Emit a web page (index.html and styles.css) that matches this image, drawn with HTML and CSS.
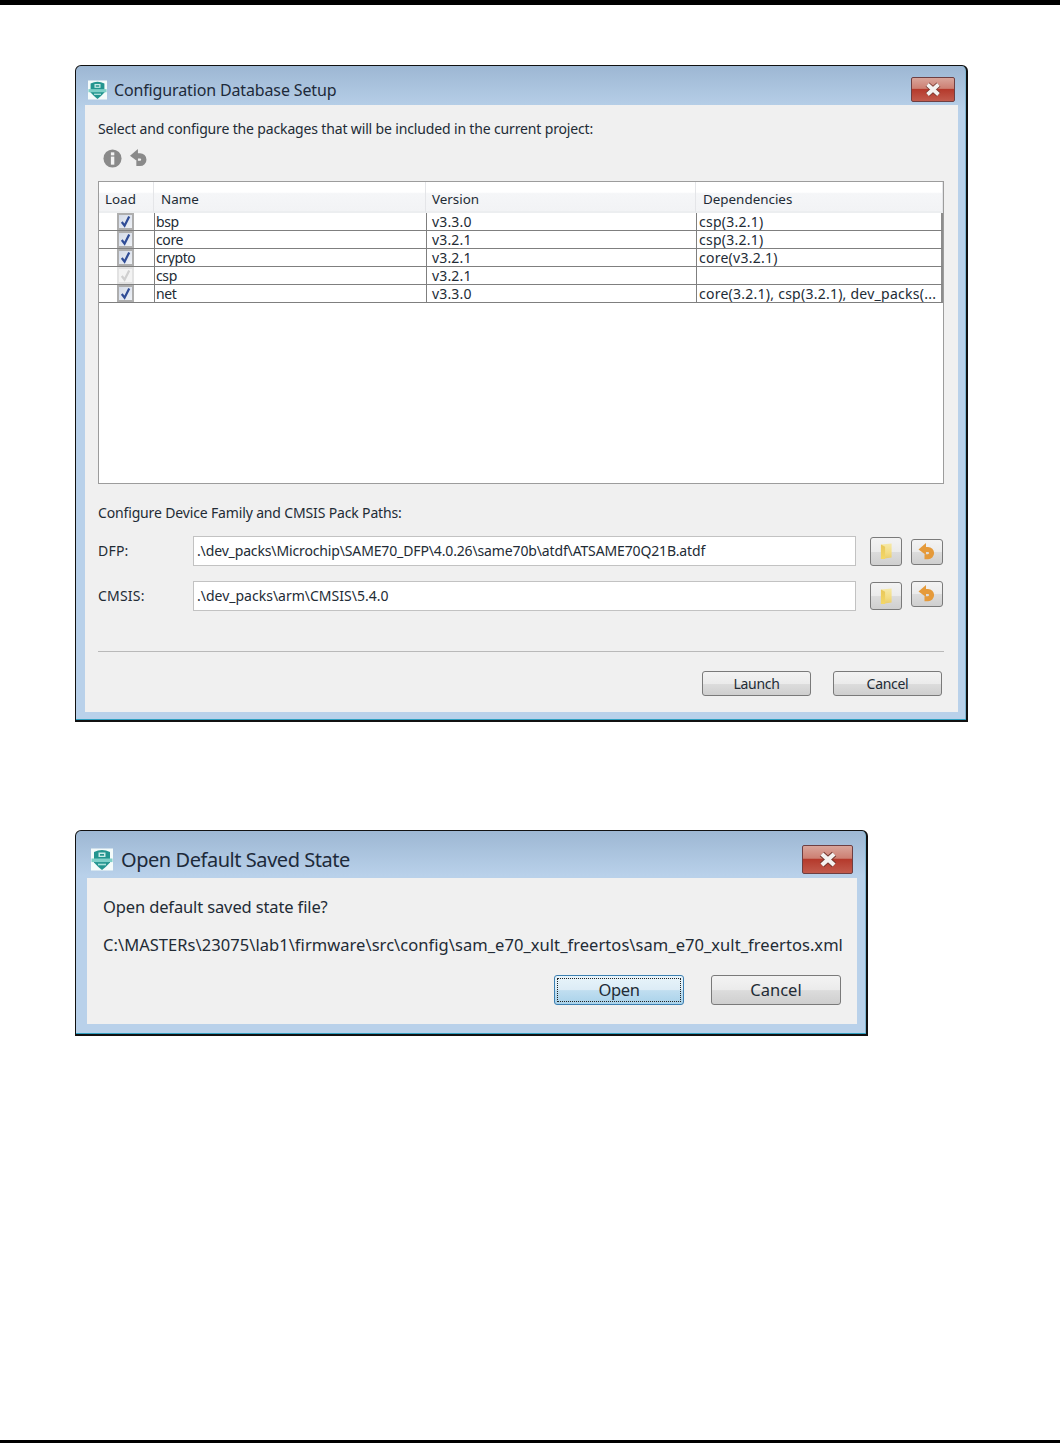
FILE: index.html
```html
<!DOCTYPE html>
<html lang="en">
<head>
  <meta charset="UTF-8" />
  <title>Configuration Database Setup</title>
  <link rel="stylesheet" href="styles.css">
</head>
<body>

  <!-- shared icons -->
  <svg class="defs" width="0" height="0">
    <defs>
      <linearGradient id="folder-fill" x1="0" y1="0" x2="0" y2="1">
        <stop offset="0" stop-color="#f6e9a8"/>
        <stop offset="0.6" stop-color="#f3dc82"/>
        <stop offset="1" stop-color="#e9cc6a"/>
      </linearGradient>
      <linearGradient id="folder-side" x1="0" y1="0" x2="0" y2="1">
        <stop offset="0" stop-color="#e8c75a"/>
        <stop offset="1" stop-color="#f4d765"/>
      </linearGradient>
    </defs>
    <symbol id="logo" viewBox="0 0 22 22">
      <rect width="22" height="22" fill="#f4fbfa"/>
      <path d="M3 3.5 Q11 -0.5 19 3.5 V14 Q15 18.5 11 21.5 Q7 18.5 3 14 Z" fill="#23958f"/>
      <rect x="0.5" y="10" width="21" height="3.6" fill="#7fd0c8"/>
      <path d="M7.5 4 H14.5 V8.5 H7.5 Z" fill="#c9ebe7"/>
      <path d="M9 5.5 H13 V7.2 H9 Z" fill="#23958f"/>
      <rect x="7" y="15.2" width="8" height="1.6" fill="#a9e0da"/>
    </symbol>
    <symbol id="close-x" viewBox="0 0 18 15">
      <path d="M3.5 2.5 L14.5 12.5 M14.5 2.5 L3.5 12.5" stroke="#75372f" stroke-width="5.6" fill="none"/>
      <path d="M3.5 2.5 L14.5 12.5 M14.5 2.5 L3.5 12.5" stroke="#f4f2f0" stroke-width="3.8" fill="none"/>
    </symbol>
    <symbol id="check" viewBox="0 0 14 14">
      <path d="M3 7.5 L6 11.5 L11 1.5" stroke="currentColor" stroke-width="2.4" fill="none"/>
    </symbol>
    <symbol id="undo" viewBox="0 0 18 18">
      <path d="M5 6.5 H9.5 A3.6 3.6 0 0 1 9.5 13.7 H6" stroke="currentColor" stroke-width="5" fill="none"/>
      <path d="M7.5 0 L0 6.5 L7.5 12 Z" fill="currentColor"/>
    </symbol>
    <symbol id="folder" viewBox="0 0 14 18">
      <path d="M1 1.5 L12.5 0.5 V15.5 L1 17 Z" fill="url(#folder-fill)"/>
      <path d="M1 1.5 L5.5 4 V17 L1 17 Z" fill="url(#folder-side)"/>
    </symbol>
  </svg>

  <div class="top-bar"></div>

  <section class="dialog dialog-setup">
    <div class="titlebar">
      <svg class="logo"><use href="#logo"/></svg>
      <span class="title">Configuration Database Setup</span>
      <button class="close"><svg><use href="#close-x"/></svg></button>
    </div>

    <div class="client">
      <p class="line">Select and configure the packages that will be included in the current project:</p>

      <div class="toolbar">
        <svg class="tool-icon" viewBox="0 0 20 20">
          <circle cx="10" cy="10" r="9.5" fill="#8a8a8a"/>
          <rect x="8.3" y="3.5" width="3.6" height="3.2" fill="#f4f4f4"/>
          <rect x="8.3" y="8" width="3.6" height="8.5" fill="#f4f4f4"/>
        </svg>
        <svg class="tool-icon tool-undo"><use href="#undo"/></svg>
      </div>

      <div class="table-box">
        <table class="packages">
          <colgroup>
            <col class="col-load"><col class="col-name"><col class="col-version"><col class="col-deps">
          </colgroup>
          <thead>
            <tr><th>Load</th><th>Name</th><th>Version</th><th>Dependencies</th></tr>
          </thead>
          <tbody>
            <tr>
              <td class="load"><span class="checkbox"><svg><use href="#check"/></svg></span></td>
              <td>bsp</td><td>v3.3.0</td><td>csp(3.2.1)</td>
            </tr>
            <tr>
              <td class="load"><span class="checkbox"><svg><use href="#check"/></svg></span></td>
              <td>core</td><td>v3.2.1</td><td>csp(3.2.1)</td>
            </tr>
            <tr>
              <td class="load"><span class="checkbox"><svg><use href="#check"/></svg></span></td>
              <td>crypto</td><td>v3.2.1</td><td>core(v3.2.1)</td>
            </tr>
            <tr>
              <td class="load"><span class="checkbox disabled"><svg><use href="#check"/></svg></span></td>
              <td>csp</td><td>v3.2.1</td><td></td>
            </tr>
            <tr>
              <td class="load"><span class="checkbox"><svg><use href="#check"/></svg></span></td>
              <td>net</td><td>v3.3.0</td><td>core(3.2.1), csp(3.2.1), dev_packs(...</td>
            </tr>
          </tbody>
        </table>
      </div>

      <p class="line paths-head">Configure Device Family and CMSIS Pack Paths:</p>

      <div class="path-row dfp">
        <label class="path-label">DFP:</label>
        <div class="path-input">.\dev_packs\Microchip\SAME70_DFP\4.0.26\same70b\atdf\ATSAME70Q21B.atdf</div>
        <button class="btn icon-btn browse"><svg><use href="#folder"/></svg></button>
        <button class="btn icon-btn reset"><svg><use href="#undo"/></svg></button>
      </div>

      <div class="path-row cmsis">
        <label class="path-label">CMSIS:</label>
        <div class="path-input">.\dev_packs\arm\CMSIS\5.4.0</div>
        <button class="btn icon-btn browse"><svg><use href="#folder"/></svg></button>
        <button class="btn icon-btn reset"><svg><use href="#undo"/></svg></button>
      </div>

      <hr class="separator">

      <div class="actions">
        <button class="btn action">Launch</button>
        <button class="btn action">Cancel</button>
      </div>
    </div>
  </section>

  <section class="dialog dialog-open">
    <div class="titlebar">
      <svg class="logo"><use href="#logo"/></svg>
      <span class="title">Open Default Saved State</span>
      <button class="close"><svg><use href="#close-x"/></svg></button>
    </div>

    <div class="client">
      <p class="line question">Open default saved state file?</p>
      <p class="line file-path">C:\MASTERs\23075\lab1\firmware\src\config\sam_e70_xult_freertos\sam_e70_xult_freertos.xml</p>
      <div class="actions">
        <button class="btn action default"><span>Open</span></button>
        <button class="btn action">Cancel</button>
      </div>
    </div>
  </section>

  <div class="bottom-bar"></div>

</body>
</html>
```

FILE: styles.css
```css
* {
  box-sizing: border-box;
}

body {
  margin: 0;
  height: 1443px;
  display: flex;
  flex-direction: column;
  align-items: flex-start;
  background: #fff;
  color: #222b35;
  font-family: "Noto Sans", sans-serif;
  font-size: 14px;
  overflow: hidden;
}

.defs {
  position: absolute;
}

.top-bar {
  width: 100%;
  height: 5px;
  background: #000;
  flex: none;
}

.bottom-bar {
  width: 100%;
  height: 3px;
  margin-top: auto;
  background: #000;
  flex: none;
}

p {
  margin: 0;
}

/* window frame */
.dialog {
  margin-left: 75px;
  border: 1px solid #111;
  border-width: 1px 2px 2px 1px;
  border-radius: 6px 6px 0 0;
  background: linear-gradient(#9db7d3, #b9d1ea 45px);
  box-shadow: inset 0 -1px 0 #2f9fc0, inset -1px 0 0 #7fb4cf;
  flex: none;
}

.dialog-setup {
  width: 893px;
  height: 657px;
  margin-top: 60px;
  padding: 0 8px 8px 9px;
}

.dialog-open {
  width: 793px;
  height: 206px;
  margin-top: 108px;
  padding: 0 9px 10px 11px;
}

.titlebar {
  display: flex;
  align-items: center;
}

.dialog-setup .titlebar {
  height: 39px;
  padding: 8px 0 0 3px;
}

.dialog-open .titlebar {
  height: 47px;
  padding: 10px 0 0 4px;
}

.logo {
  flex: none;
}

.dialog-setup .logo {
  width: 19px;
  height: 20px;
  margin-right: 7px;
}

.dialog-open .logo {
  width: 22px;
  height: 23px;
  margin-right: 8px;
}

.title {
  color: #1d2a3a;
}

.dialog-setup .title {
  font-size: 16px;
  letter-spacing: -0.14px;
}

.dialog-open .title {
  font-size: 20px;
  letter-spacing: -0.45px;
}

.close {
  margin-left: auto;
  padding: 0;
  display: flex;
  align-items: center;
  justify-content: center;
  border: 1px solid #6e3f42;
  border-radius: 2px;
  background: linear-gradient(#d9a59b, #cd8073 45%, #b53a2c 50%, #c25b4d);
}

.close svg {
  width: 18px;
  height: 15px;
}

.dialog-setup .close {
  width: 44px;
  height: 25px;
  margin-right: 3px;
}

.dialog-open .close {
  width: 51px;
  height: 29px;
  margin-right: 4px;
}

.dialog-open .close svg {
  width: 20px;
  height: 17px;
}

.client {
  background: #f0f0f0;
}

.dialog-setup .client {
  height: 607px;
  padding: 15px 14px 0 13px;
}

.dialog-open .client {
  height: 146px;
  padding: 19px 16px 0 16px;
}

.line {
  line-height: 18px;
  letter-spacing: -0.15px;
  white-space: nowrap;
}

.dialog-open .line {
  font-size: 16.5px;
  line-height: 20px;
}

.dialog-open .question {
  letter-spacing: -0.13px;
}

.dialog-open .file-path {
  letter-spacing: 0.05px;
}

/* toolbar above the table */
.toolbar {
  display: flex;
  gap: 8px;
  margin-top: 11px;
  padding-left: 5px;
  height: 20px;
}

.tool-icon {
  width: 19px;
  height: 19px;
}

.tool-undo {
  color: #8a8a8a;
}

/* package table */
.table-box {
  height: 303px;
  margin-top: 12px;
  border: 1px solid #9c9c9c;
  background: #fff;
}

.packages {
  width: 100%;
  border-collapse: separate;
  border-spacing: 0;
  table-layout: fixed;
}

.col-load { width: 55px; }
.col-name { width: 272px; }
.col-version { width: 270px; }
.col-deps { width: 247px; }

.packages th {
  height: 31px;
  padding: 4px 0 0 6px;
  font-size: 13.4px;
  font-weight: normal;
  text-align: left;
  line-height: 18px;
  background: linear-gradient(#fff 35%, #f5f6f8 40%, #f2f3f5);
  border-right: 1px solid #e4e5e8;
  border-bottom: 2px solid #eceef0;
}

.packages th:nth-child(2),
.packages th:nth-child(4) {
  padding-left: 7px;
}

.packages td {
  height: 18px;
  padding: 1px 0 0 1px;
  line-height: 16px;
  overflow: hidden;
  white-space: nowrap;
  border-left: 1px solid #7f7f7f;
  border-bottom: 1px solid #7f7f7f;
}

.packages td:nth-child(2) {
  letter-spacing: -0.4px;
}

.packages td:nth-child(3) {
  padding-left: 5px;
  letter-spacing: 0.15px;
}

.packages td:nth-child(4) {
  padding-left: 2px;
  letter-spacing: 0.25px;
}

.packages td:first-child {
  border-left: 0;
}

.packages td:last-child {
  border-right: 2px solid #8c8c8c;
}

.packages td.load {
  padding: 0 0 0 18px;
}

.checkbox {
  display: flex;
  align-items: center;
  justify-content: center;
  width: 17px;
  height: 17px;
  border: 2px solid #aeaeae;
  background: linear-gradient(135deg, #d4dbe8, #eef1f6);
  color: #2f4c96;
}

.checkbox svg {
  display: block;
  width: 13px;
  height: 13px;
}

.checkbox.disabled {
  border-color: #e2e2e2;
  background: #f3f3f3;
  color: #cfcfcf;
}

.paths-head {
  margin-top: 20px;
}

/* DFP and CMSIS rows */
.path-row {
  display: flex;
  align-items: flex-start;
  height: 30px;
  padding-right: 1px;
}

.dfp {
  margin-top: 14px;
}

.cmsis {
  margin-top: 15px;
}

.path-label {
  width: 95px;
  line-height: 30px;
  letter-spacing: 0.2px;
  flex: none;
}

.path-input {
  flex: 1;
  height: 30px;
  padding-left: 3px;
  line-height: 28px;
  letter-spacing: -0.14px;
  background: #fff;
  border: 1px solid #c2c2c2;
  white-space: nowrap;
}

.cmsis .path-input {
  letter-spacing: 0;
}

.btn {
  padding: 0;
  font-family: inherit;
  color: inherit;
  border: 1px solid #7a7a7a;
  border-radius: 3px;
  background: linear-gradient(#f3f3f3, #ebebeb 50%, #dcdcdc 52%, #cfcfcf);
}

.icon-btn {
  width: 32px;
  display: flex;
  align-items: center;
  justify-content: center;
  flex: none;
}

.browse {
  margin-left: 14px;
  height: 29px;
}

.browse svg {
  width: 13px;
  height: 17px;
}

.reset {
  margin-left: 9px;
  height: 26px;
  color: #e59a3a;
}

.reset svg {
  width: 19px;
  height: 18px;
}

.dfp .browse {
  margin-top: 1px;
}

.dfp .reset {
  margin-top: 3px;
}

.cmsis .browse {
  margin-top: 1px;
  height: 28px;
}

.separator {
  height: 1px;
  margin: 40px 0 0;
  border: 0;
  background: #b9b9b9;
}

.actions {
  display: flex;
  justify-content: flex-end;
}

.dialog-setup .actions {
  margin-top: 19px;
  padding-right: 2px;
  gap: 22px;
}

.dialog-setup .action {
  width: 109px;
  height: 25px;
  font-size: 14px;
  letter-spacing: -0.3px;
}

.file-path {
  margin-top: 18px;
}

.dialog-open .actions {
  margin-top: 20px;
  gap: 27px;
}

.dialog-open .action {
  width: 130px;
  height: 30px;
  padding-bottom: 2px;
  font-size: 16.5px;
}

/* focused default button */
.dialog-open .action.default {
  padding: 2px;
  border-color: #3c7fb1;
  background: linear-gradient(#e8f4fa, #dcecf6 50%, #c0def0 52%, #a9d2ea);
  letter-spacing: -0.4px;
}

.action.default span {
  display: flex;
  align-items: center;
  justify-content: center;
  height: 100%;
  padding-bottom: 2px;
  border: 1px dotted #222;
}
```
